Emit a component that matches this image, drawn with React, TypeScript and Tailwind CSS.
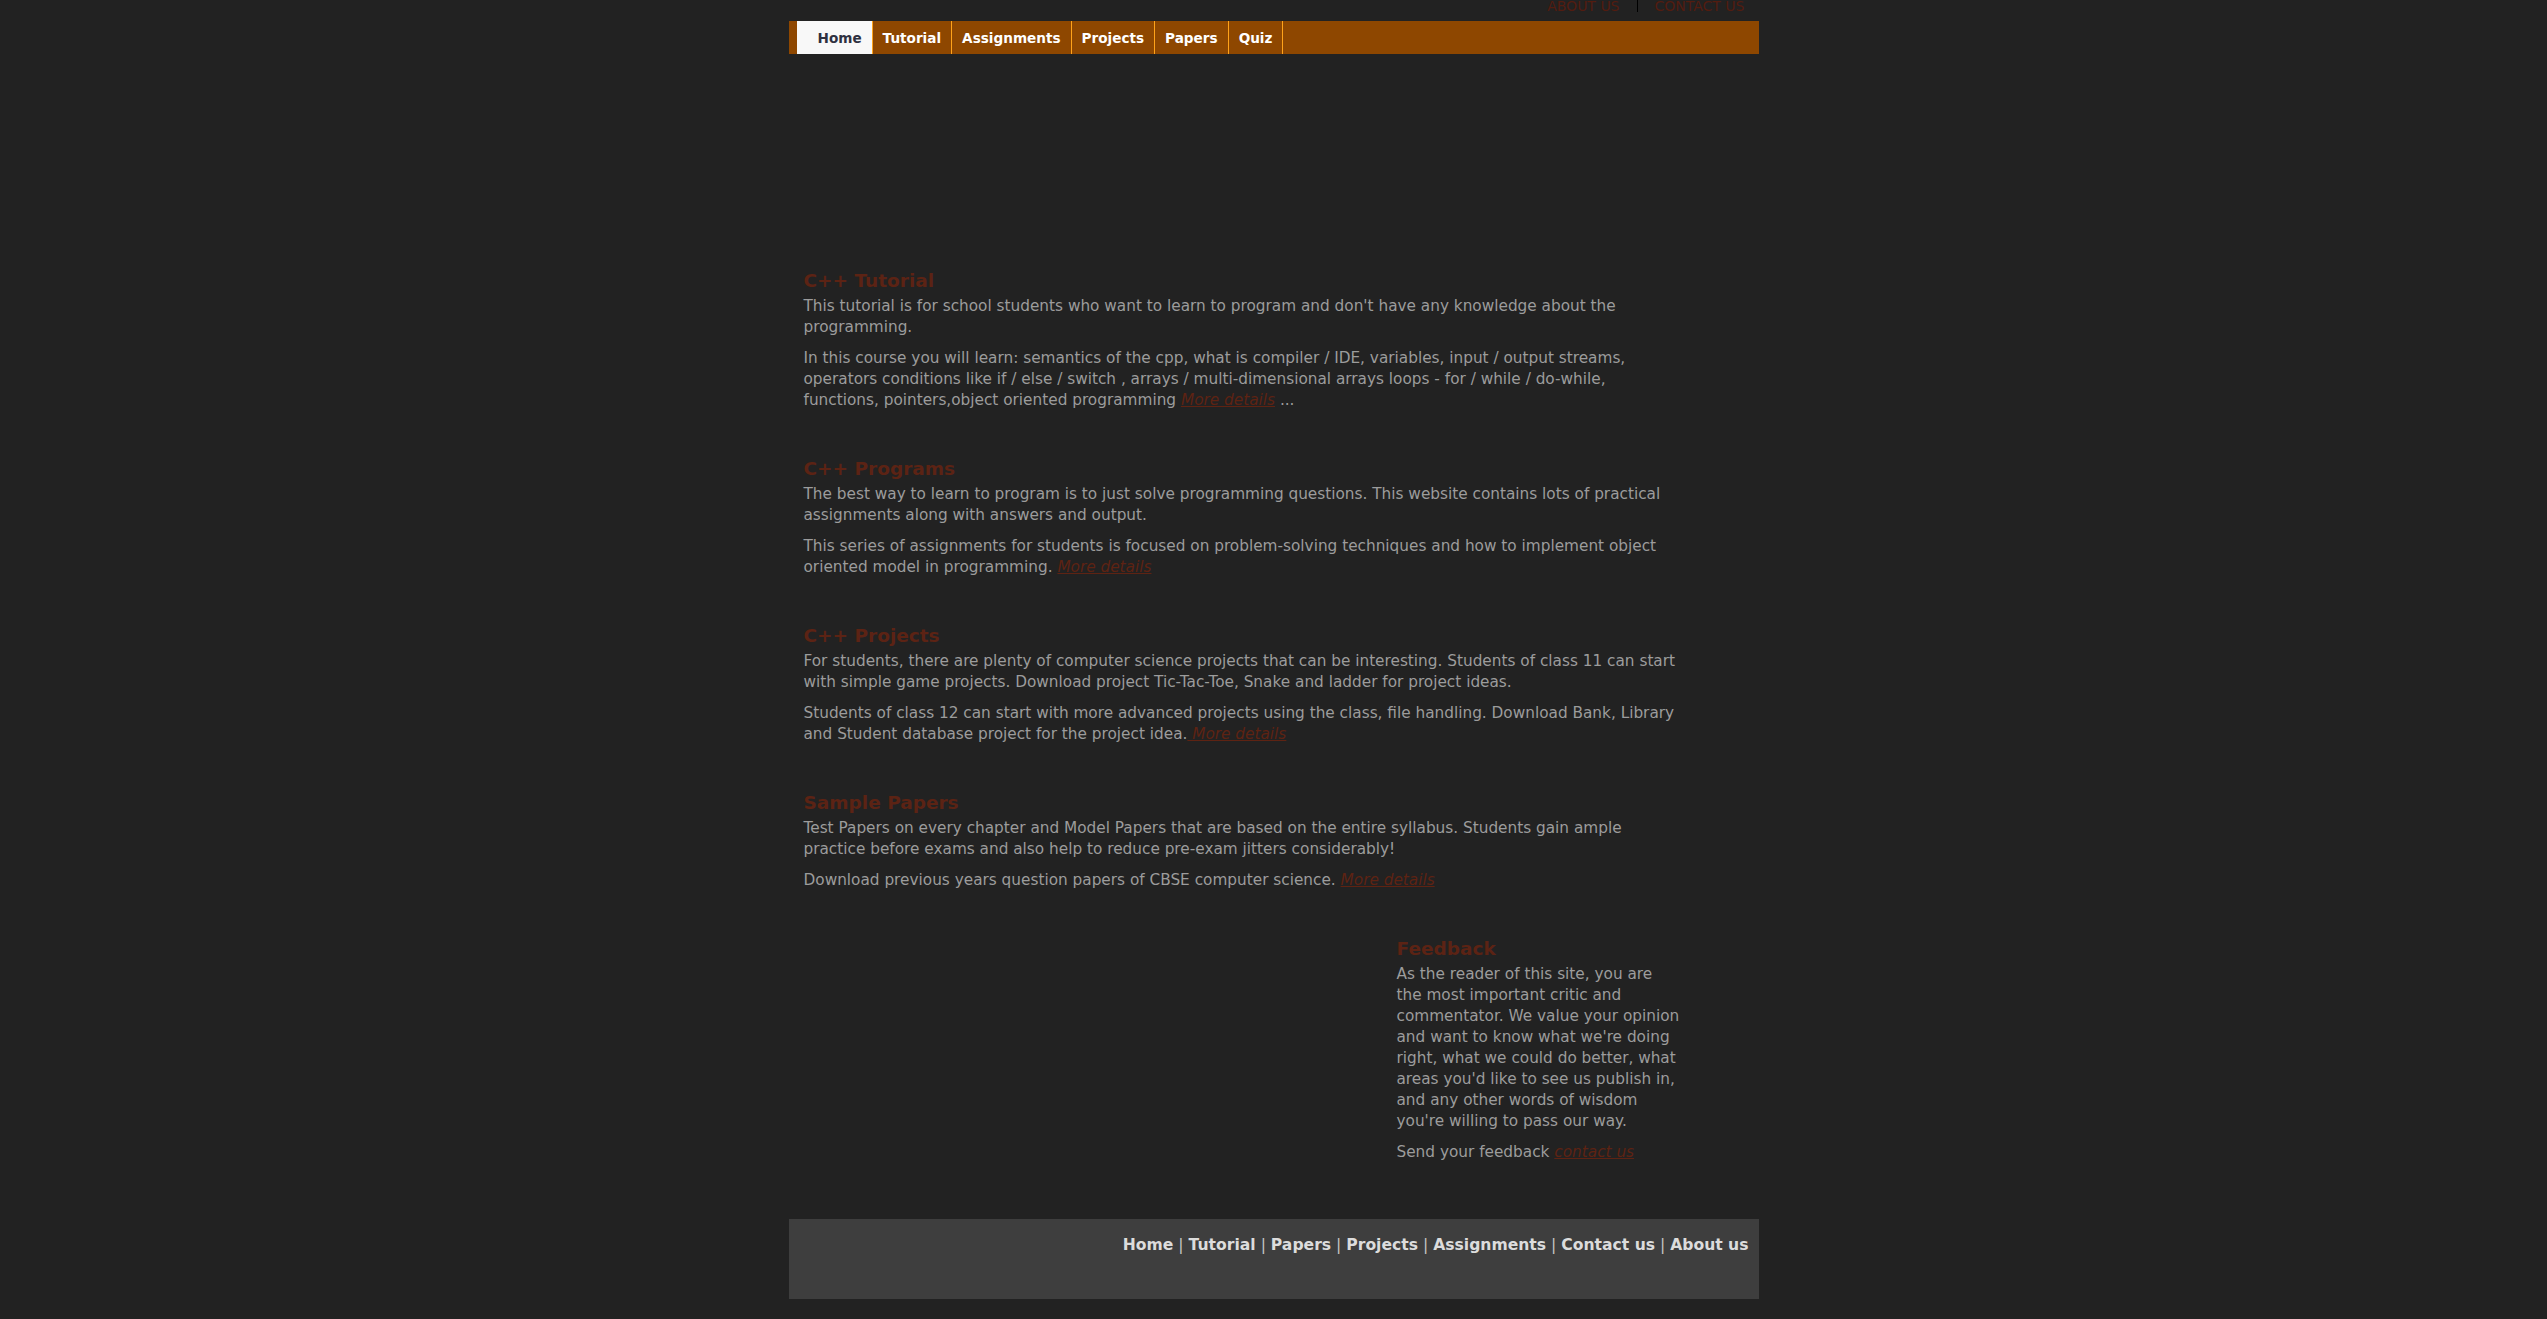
import React from 'react';

const navItems = ['Home', 'Tutorial', 'Assignments', 'Projects', 'Papers', 'Quiz'];
const footerLinks = ['Home', 'Tutorial', 'Papers', 'Projects', 'Assignments', 'Contact us', 'About us'];

const MoreLink: React.FC<{ lead?: boolean }> = ({ lead }) => (
    <a href="#" className="italic underline text-[#5e2313]">
        {lead ? ' More details' : 'More details'}
    </a>
);

const Section: React.FC<{ title: string; children: React.ReactNode }> = ({ title, children }) => (
    <section className="mb-[47px]">
        <h2 className="text-[18.5px] leading-[21px] font-bold text-[#5c2314] mb-[5px]">{title}</h2>
        <div className="flex flex-col gap-[10px]">{children}</div>
    </section>
);

const App: React.FC = () => {
    return (
        <div className="min-h-screen bg-[#222222] font-['DejaVu_Sans',Verdana,sans-serif] text-[15.3px] leading-[21px] text-[#9c9c9c]">
            <div className="w-[970px] mx-auto pb-[20px]">
                {/* Top links */}
                <div className="h-[21px] flex justify-end items-start pr-[14px] text-[14px] leading-[12px] uppercase text-[#531c10]">
                    <a href="#" className="pr-[17px]">About us</a>
                    <a href="#" className="pl-[17px] border-l border-black">Contact us</a>
                </div>

                {/* Nav bar */}
                <nav className="h-[33px] bg-[#8e4700] flex pl-[8px] text-[13.6px] font-bold">
                    {navItems.map((item, idx) =>
                        idx === 0 ? (
                            <a key={item} href="#" className="flex items-center pt-[2px] pl-[21px] pr-[10px] bg-[#f8f8f8] text-[#2e3040] border-r border-[#ffa31a]">
                                {item}
                            </a>
                        ) : (
                            <a key={item} href="#" className="flex items-center pt-[2px] px-[10px] text-white border-r border-[#ffa31a]">
                                {item}
                            </a>
                        )
                    )}
                </nav>

                {/* Empty banner area */}
                <div className="h-[216px]" />

                {/* Content */}
                <div className="pl-[15px]">
                    <div className="w-[877px]">
                        <Section title="C++ Tutorial">
                            <p>This tutorial is for school students who want to learn to program and don't have any knowledge about the programming.</p>
                            <p>
                                In this course you will learn: semantics of the cpp, what is compiler / IDE, variables, input / output streams, operators conditions like if / else / switch , arrays / multi-dimensional arrays loops - for / while / do-while, functions, pointers,object oriented programming <MoreLink /> ...
                            </p>
                        </Section>

                        <Section title="C++ Programs">
                            <p>The best way to learn to program is to just solve programming questions. This website contains lots of practical assignments along with answers and output.</p>
                            <p>
                                This series of assignments for students is focused on problem-solving techniques and how to implement object oriented model in programming. <MoreLink />
                            </p>
                        </Section>

                        <Section title="C++ Projects">
                            <p>For students, there are plenty of computer science projects that can be interesting. Students of class 11 can start with simple game projects. Download project Tic-Tac-Toe, Snake and ladder for project ideas.</p>
                            <p>
                                Students of class 12 can start with more advanced projects using the class, file handling. Download Bank, Library and Student database project for the project idea.<MoreLink lead />
                            </p>
                        </Section>

                        <Section title="Sample Papers">
                            <p>Test Papers on every chapter and Model Papers that are based on the entire syllabus. Students gain ample practice before exams and also help to reduce pre-exam jitters considerably!</p>
                            <p>
                                Download previous years question papers of CBSE computer science. <MoreLink />
                            </p>
                        </Section>
                    </div>

                    {/* Feedback */}
                    <aside className="ml-[593px] w-[285px] mb-[56px]">
                        <h2 className="text-[18.5px] leading-[21px] font-bold text-[#5c2314] mb-[5px]">Feedback</h2>
                        <p className="mb-[10px]">
                            As the reader of this site, you are the most important critic and commentator. We value your opinion and want to know what we're doing right, what we could do better, what areas you'd like to see us publish in, and any other words of wisdom you're willing to pass our way.
                        </p>
                        <p>
                            Send your feedback{' '}
                            <a href="#" className="italic underline text-[#5e2313]">contact us</a>
                        </p>
                    </aside>
                </div>

                {/* Footer */}
                <footer className="h-[80px] bg-[#3e3e3e] pt-[17px] pr-[10px] flex justify-end items-start">
                    <div className="text-[15.6px] leading-[18px] font-bold text-[#dcdcdc]">
                        {footerLinks.map((link, idx) => (
                            <React.Fragment key={link}>
                                {idx > 0 && <span className="font-normal text-[#c4c4c4]"> | </span>}
                                <a href="#">{link}</a>
                            </React.Fragment>
                        ))}
                    </div>
                </footer>
            </div>
        </div>
    );
};

export default App;
